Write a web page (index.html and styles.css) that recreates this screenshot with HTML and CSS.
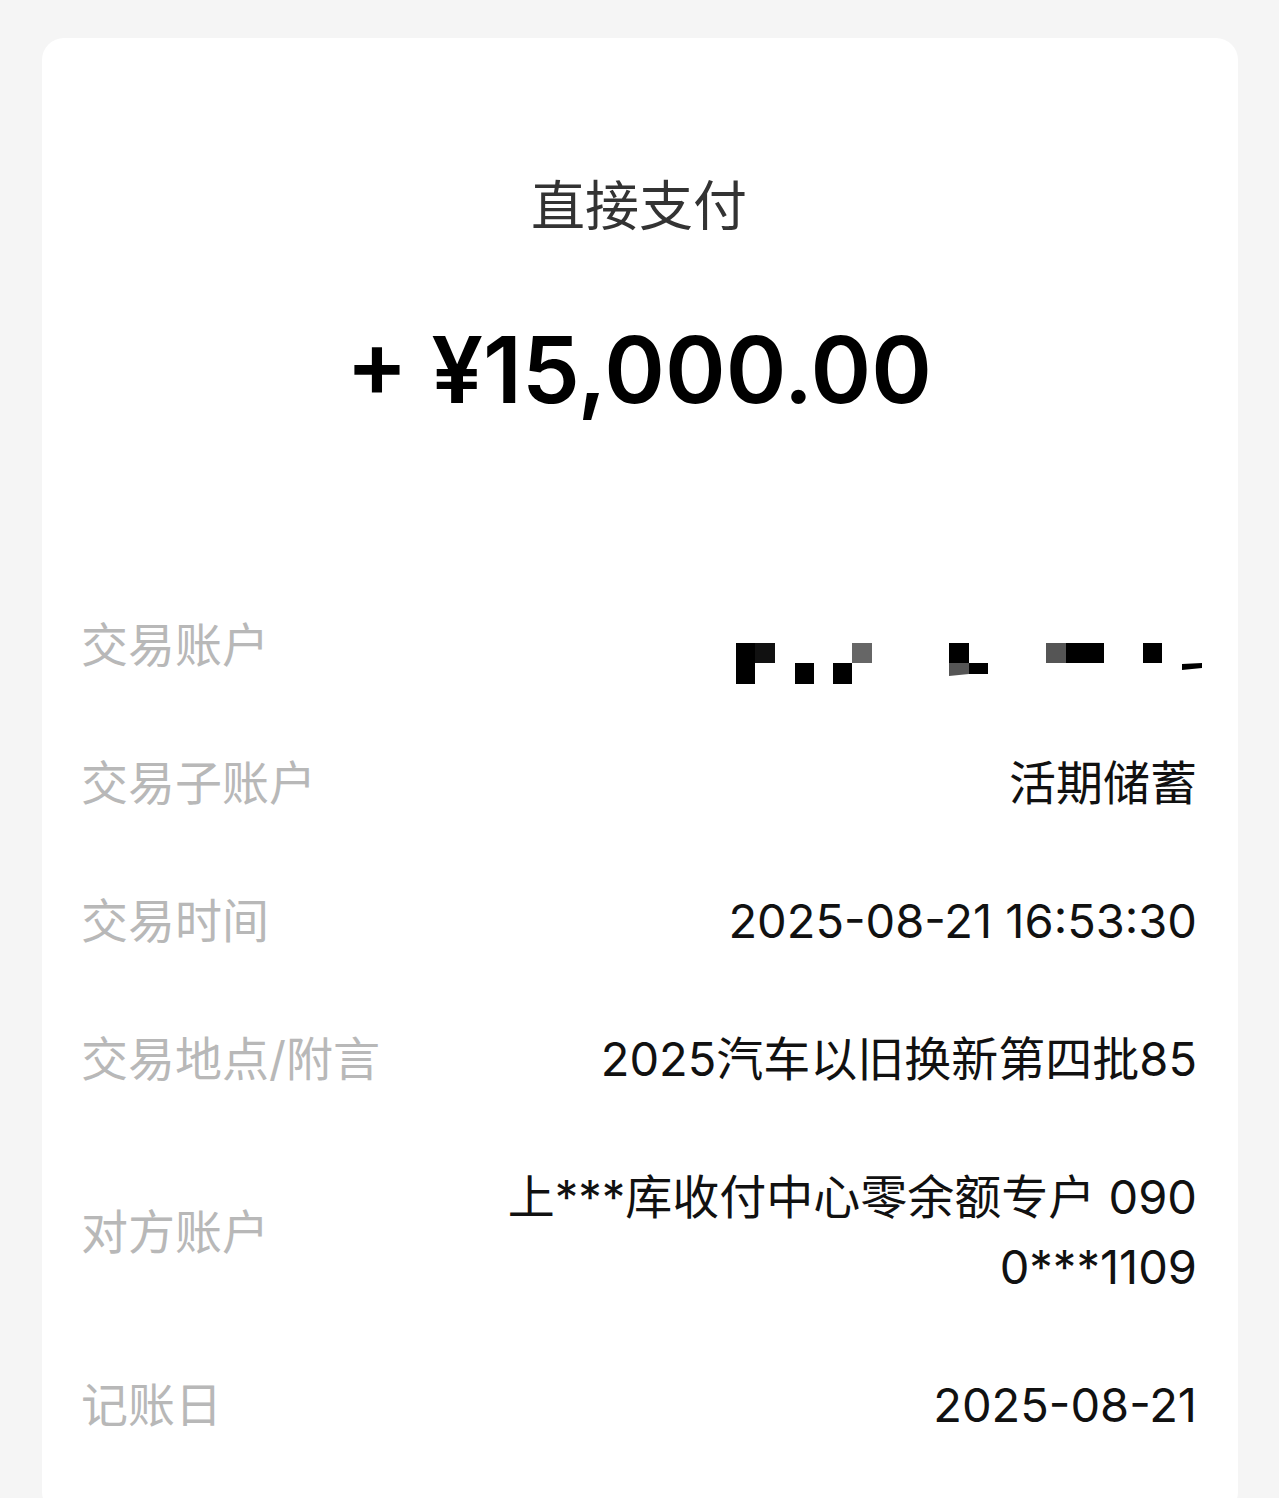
FILE: index.html
```html
<!DOCTYPE html>
<html lang="zh-CN">
<head>
    <meta charset="UTF-8">
    <meta name="viewport" content="width=device-width, initial-scale=1.0">
    <title>交易详情</title>
    <link rel="stylesheet" href="styles.css">
</head>
<body>

<div class="card">
    <h1 class="title">直接支付</h1>
    <div class="amount">+ ¥15,000.00</div>

    <div class="details">
        <div class="row">
            <span class="label">交易账户</span>
            <span class="value masked">
                <!-- pixelated account number -->
                <svg width="466" height="41" viewBox="0 0 466 41">
                    <rect x="0" y="0" width="19" height="41" fill="#000"/>
                    <rect x="19" y="0" width="20" height="20" fill="#111"/>
                    <rect x="59" y="20" width="19" height="21" fill="#000"/>
                    <rect x="97" y="20" width="19" height="21" fill="#000"/>
                    <rect x="116" y="0" width="20" height="20" fill="#666"/>
                    <rect x="213" y="0" width="20" height="20" fill="#000"/>
                    <polygon points="213,20 233,20 233,31 213,33" fill="#555"/>
                    <rect x="233" y="20" width="19" height="11" fill="#000"/>
                    <rect x="310" y="0" width="20" height="20" fill="#555"/>
                    <rect x="330" y="0" width="38" height="20" fill="#000"/>
                    <rect x="407" y="0" width="19" height="20" fill="#000"/>
                    <polygon points="446,21 466,20 466,25 446,27" fill="#000"/>
                </svg>
            </span>
        </div>
        <div class="row">
            <span class="label">交易子账户</span>
            <span class="value">活期储蓄</span>
        </div>
        <div class="row">
            <span class="label">交易时间</span>
            <span class="value">2025-08-21 16:53:30</span>
        </div>
        <div class="row">
            <span class="label">交易地点/附言</span>
            <span class="value">2025汽车以旧换新第四批85</span>
        </div>
        <div class="row">
            <span class="label">对方账户</span>
            <span class="value">上***库收付中心零余额专户 090<br>0***1109</span>
        </div>
        <div class="row">
            <span class="label">记账日</span>
            <span class="value">2025-08-21</span>
        </div>
    </div>
</div>

</body>
</html>
```

FILE: styles.css
```css
body { margin: 0; background: #f5f5f5; font-family: Inter, "Noto Sans CJK SC", sans-serif; }
.card { margin: 38px 41px 0 42px; padding: 134px 41px 40px 39px; background: #fff; border-radius: 22px; min-height: 1300px; }
.title { margin: 0 0 68px; font-size: 54px; line-height: 70px; font-weight: 400; color: #333; text-align: center; }
.amount { margin: 0 0 146px; font-size: 92px; line-height: 120px; font-weight: 600; color: #000; text-align: center; }
.row { display: flex; justify-content: space-between; align-items: center; padding: 34px 0; }
.label { font-size: 47px; line-height: 70px; color: #b8b8b8; white-space: nowrap; }
.value { font-size: 47px; line-height: 70px; color: #111; text-align: right; }
.masked { display: flex; margin-right: -5px; transform: translateY(18px); }
.masked svg { display: block; }
```
